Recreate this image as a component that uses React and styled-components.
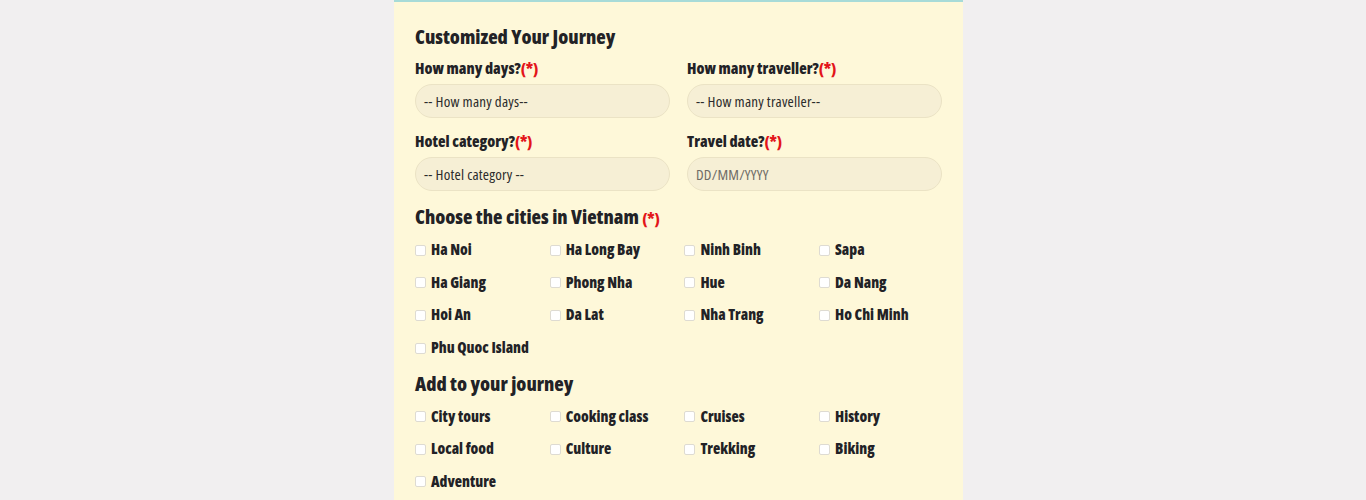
import React from "react";
import styled, { createGlobalStyle } from "styled-components";

const GlobalStyle = createGlobalStyle`
  html, body {
    margin: 0;
    padding: 0;
    background: #f1eff0;
  }
  body {
    font-family: "Open Sans", "Liberation Sans", sans-serif;
  }
`;

const cities = [
  "Ha Noi", "Ha Long Bay", "Ninh Binh", "Sapa",
  "Ha Giang", "Phong Nha", "Hue", "Da Nang",
  "Hoi An", "Da Lat", "Nha Trang", "Ho Chi Minh",
  "Phu Quoc Island",
];

const extras = [
  "City tours", "Cooking class", "Cruises", "History",
  "Local food", "Culture", "Trekking", "Biking",
  "Adventure",
];

const Field = ({ label, placeholder, muted }) => (
  <FieldBox>
    <Label>
      {label}
      <Req>(*)</Req>
    </Label>
    <Input $muted={muted}>{placeholder}</Input>
  </FieldBox>
);

const CheckList = ({ items }) => (
  <CheckGrid>
    {items.map((item) => (
      <CheckItem key={item}>
        <Box />
        {item}
      </CheckItem>
    ))}
  </CheckGrid>
);

const App = () => {
  return (
    <>
      <GlobalStyle />
      <Page>
        <Panel>
          <Title>Customized Your Journey</Title>
          <FieldRow>
            <Field label='How many days?' placeholder='-- How many days--' />
            <Field
              label='How many traveller?'
              placeholder='-- How many traveller--'
            />
          </FieldRow>
          <FieldRow>
            <Field label='Hotel category?' placeholder='-- Hotel category --' />
            <Field label='Travel date?' placeholder='DD/MM/YYYY' muted />
          </FieldRow>
          <SectionTitle>
            Choose the cities in Vietnam <Req>(*)</Req>
          </SectionTitle>
          <CheckList items={cities} />
          <SectionTitle>Add to your journey</SectionTitle>
          <CheckList items={extras} />
        </Panel>
      </Page>
    </>
  );
};

const Page = styled.div`
  display: flex;
  justify-content: center;
  height: 500px;
  overflow: hidden;
`;

const Panel = styled.div`
  width: 569px;
  margin-right: 9px;
  box-sizing: border-box;
  background: #fef8d9;
  border-top: 2px solid #a7dbd8;
  padding: 22px 21px 40px;
  font-stretch: 75%;
  color: #222226;
`;

const Title = styled.h2`
  margin: 0 0 8px;
  font-size: 19.5px;
  font-weight: 800;
  line-height: 26px;
`;

const SectionTitle = styled.h3`
  margin: 0 0 2px;
  font-size: 19.5px;
  font-weight: 800;
  line-height: 26px;
`;

const FieldRow = styled.div`
  display: grid;
  grid-template-columns: 1fr 1fr;
  gap: 17px;
  margin-bottom: 13px;
`;

const FieldBox = styled.div`
  display: flex;
  flex-direction: column;
`;

const Label = styled.label`
  font-size: 15.5px;
  font-weight: 800;
  line-height: 20px;
  margin-bottom: 6px;
`;

const Req = styled.span`
  color: #e3151a;
  font-weight: 800;
  font-size: 15.5px;
`;

const Input = styled.div`
  height: 34px;
  box-sizing: border-box;
  border: 1px solid #ebe3c5;
  border-radius: 17px;
  background: #f6efd5;
  padding: 0 8px;
  display: flex;
  align-items: center;
  font-size: 15px;
  font-weight: 400;
  font-stretch: 87.5%;
  letter-spacing: 0.2px;
  color: ${(p) => (p.$muted ? "#6f6c66" : "#2b2b2b")};
`;

const CheckGrid = styled.div`
  display: grid;
  grid-template-columns: repeat(4, 134.7px);
  margin-bottom: 8px;
`;

const CheckItem = styled.label`
  display: flex;
  align-items: center;
  height: 32.6px;
  font-size: 15px;
  font-weight: 800;
`;

const Box = styled.span`
  width: 9px;
  height: 9px;
  border: 1px solid #dedbd2;
  border-radius: 2px;
  background: #fff;
  margin: 2px 5px 0 0;
  flex-shrink: 0;
`;

export default App;
